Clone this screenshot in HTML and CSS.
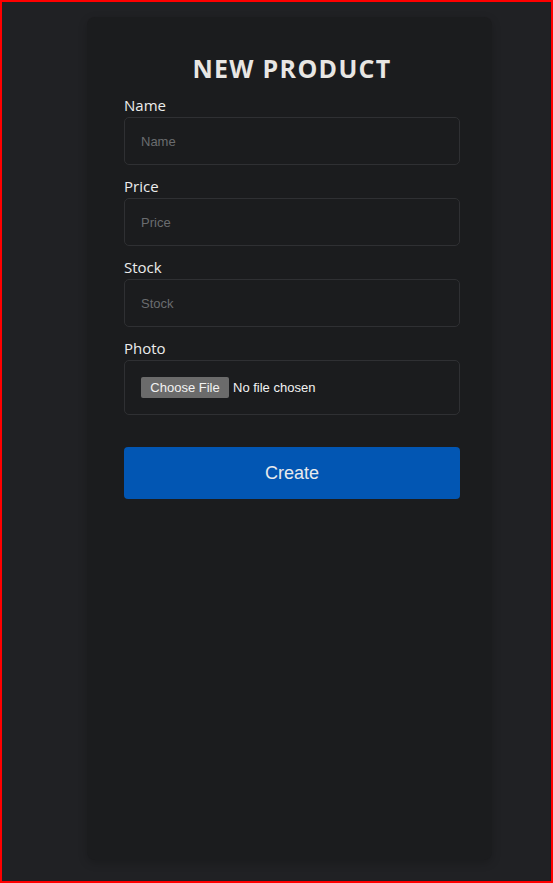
FILE: index.html
```html
<!DOCTYPE html>
<html lang="en">
<head>
<meta charset="utf-8">
<title>New Product</title>
<link rel="stylesheet" href="styles.css">
</head>
<body>
<div class="page">
  <div class="card">
    <h1 class="title">NEW PRODUCT</h1>
    <form class="form">
      <div class="group">
        <label class="label" for="name">Name</label>
        <input class="field" id="name" type="text" placeholder="Name">
      </div>
      <div class="group">
        <label class="label" for="price">Price</label>
        <input class="field" id="price" type="text" placeholder="Price">
      </div>
      <div class="group">
        <label class="label" for="stock">Stock</label>
        <input class="field" id="stock" type="text" placeholder="Stock">
      </div>
      <div class="group">
        <label class="label" for="photo">Photo</label>
        <div class="file-box">
          <span class="file-btn">Choose File</span>
          <span class="file-text">No file chosen</span>
        </div>
      </div>
      <button class="submit" type="button">Create</button>
    </form>
  </div>
</div>
</body>
</html>
```

FILE: styles.css
```css
* { box-sizing: border-box; }
html, body { margin: 0; padding: 0; }
body {
  background: #202124;
  font-family: "Open Sans", "Noto Sans", sans-serif;
}
.page {
  height: 883px;
  border: 2px solid #ff0000;
  padding: 15px 0 0 85px;
  overflow: hidden;
}
.card {
  width: 405px;
  height: 843px;
  background: #1b1c1e;
  border-radius: 8px;
  box-shadow: 0 3px 10px rgba(0, 0, 0, 0.2);
  padding: 35px 32px 0 37px;
}
.title {
  margin: 0 0 10px;
  font-size: 25px;
  line-height: 32px;
  font-weight: 700;
  letter-spacing: 1.3px;
  text-align: center;
  color: #e8e6e3;
}
.form { display: flex; flex-direction: column; }
.group { display: flex; flex-direction: column; margin-bottom: 10px; }
.label {
  font-size: 15px;
  line-height: 21px;
  padding-top: 1px;
  margin-bottom: 1px;
  color: #ececec;
}
.field {
  width: 336px;
  height: 48px;
  background: #1b1c1e;
  border: 1px solid #2f3033;
  border-radius: 5px;
  padding: 0 16px;
  font-family: "Liberation Sans", Arial, sans-serif;
  font-size: 13px;
  color: #e0e0e0;
  outline: none;
}
.field::placeholder { color: #6a6c6f; }
.file-box {
  width: 336px;
  height: 55px;
  border: 1px solid #2f3033;
  border-radius: 5px;
  padding: 0 16px;
  display: flex;
  align-items: center;
  gap: 4px;
  font-family: "Liberation Sans", Arial, sans-serif;
  font-size: 13px;
}
.file-btn {
  background: #6b6b6b;
  color: #f2f2f2;
  border-radius: 2px;
  height: 21px;
  width: 88px;
  display: flex;
  align-items: center;
  justify-content: center;
}
.file-text { color: #f2f2f2; }
.submit {
  margin-top: 22px;
  width: 336px;
  height: 52px;
  background: #0256b3;
  border: none;
  border-radius: 4px;
  color: #e8eaed;
  font-family: "Liberation Sans", Arial, sans-serif;
  font-size: 18px;
}
```
